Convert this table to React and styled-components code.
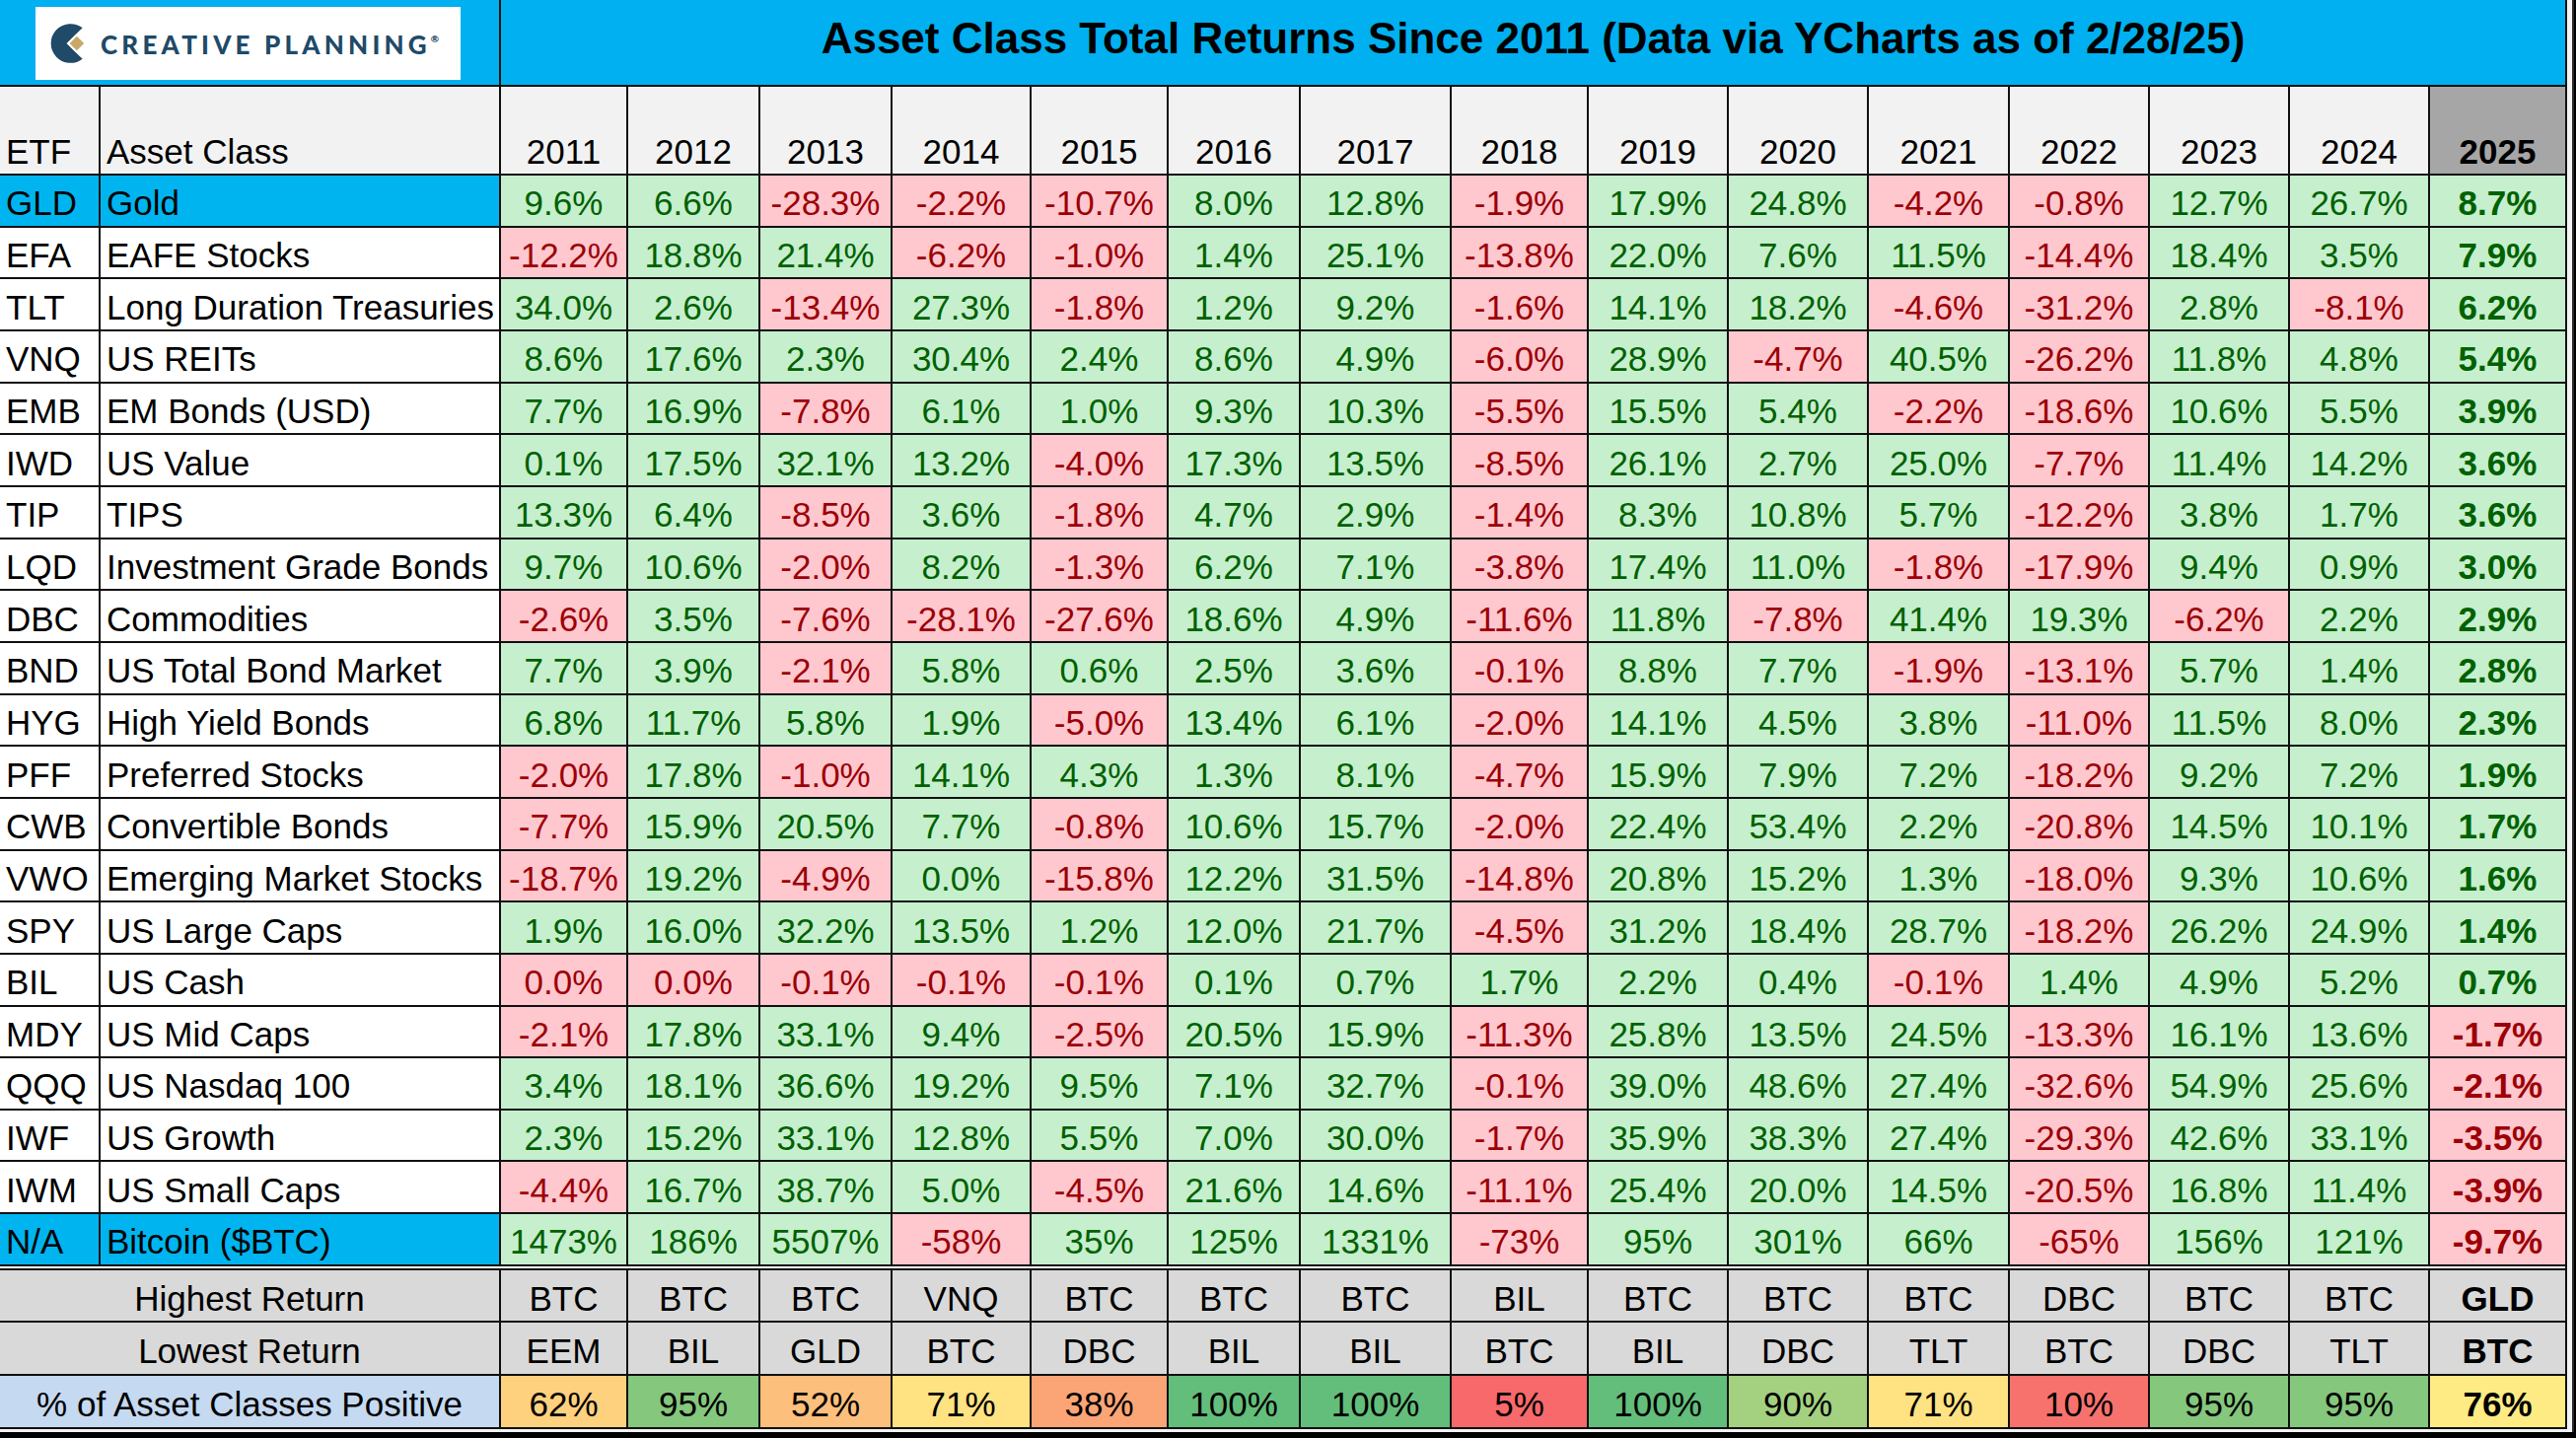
import React from 'react';
import styled, { createGlobalStyle } from 'styled-components';

const FONT = '"Liberation Sans", Arial, Helvetica, sans-serif';

const GlobalStyle = createGlobalStyle`
  html, body { margin: 0; padding: 0; background: #000; }
  body { font-family: ${FONT}; }
`;

const YEARS = [2011, 2012, 2013, 2014, 2015, 2016, 2017, 2018, 2019, 2020, 2021, 2022, 2023, 2024, 2025];
const COLS = [100, 404, 127, 132, 132, 139, 137, 132, 151, 137, 140, 140, 141, 140, 140, 140, 137];

const ROWS = [
  { etf: 'GLD', name: 'Gold', hl: true, v: ['9.6%', '6.6%', '-28.3%', '-2.2%', '-10.7%', '8.0%', '12.8%', '-1.9%', '17.9%', '24.8%', '-4.2%', '-0.8%', '12.7%', '26.7%', '8.7%'] },
  { etf: 'EFA', name: 'EAFE Stocks', v: ['-12.2%', '18.8%', '21.4%', '-6.2%', '-1.0%', '1.4%', '25.1%', '-13.8%', '22.0%', '7.6%', '11.5%', '-14.4%', '18.4%', '3.5%', '7.9%'] },
  { etf: 'TLT', name: 'Long Duration Treasuries', v: ['34.0%', '2.6%', '-13.4%', '27.3%', '-1.8%', '1.2%', '9.2%', '-1.6%', '14.1%', '18.2%', '-4.6%', '-31.2%', '2.8%', '-8.1%', '6.2%'] },
  { etf: 'VNQ', name: 'US REITs', v: ['8.6%', '17.6%', '2.3%', '30.4%', '2.4%', '8.6%', '4.9%', '-6.0%', '28.9%', '-4.7%', '40.5%', '-26.2%', '11.8%', '4.8%', '5.4%'] },
  { etf: 'EMB', name: 'EM Bonds (USD)', v: ['7.7%', '16.9%', '-7.8%', '6.1%', '1.0%', '9.3%', '10.3%', '-5.5%', '15.5%', '5.4%', '-2.2%', '-18.6%', '10.6%', '5.5%', '3.9%'] },
  { etf: 'IWD', name: 'US Value', v: ['0.1%', '17.5%', '32.1%', '13.2%', '-4.0%', '17.3%', '13.5%', '-8.5%', '26.1%', '2.7%', '25.0%', '-7.7%', '11.4%', '14.2%', '3.6%'] },
  { etf: 'TIP', name: 'TIPS', v: ['13.3%', '6.4%', '-8.5%', '3.6%', '-1.8%', '4.7%', '2.9%', '-1.4%', '8.3%', '10.8%', '5.7%', '-12.2%', '3.8%', '1.7%', '3.6%'] },
  { etf: 'LQD', name: 'Investment Grade Bonds', v: ['9.7%', '10.6%', '-2.0%', '8.2%', '-1.3%', '6.2%', '7.1%', '-3.8%', '17.4%', '11.0%', '-1.8%', '-17.9%', '9.4%', '0.9%', '3.0%'] },
  { etf: 'DBC', name: 'Commodities', v: ['-2.6%', '3.5%', '-7.6%', '-28.1%', '-27.6%', '18.6%', '4.9%', '-11.6%', '11.8%', '-7.8%', '41.4%', '19.3%', '-6.2%', '2.2%', '2.9%'] },
  { etf: 'BND', name: 'US Total Bond Market', v: ['7.7%', '3.9%', '-2.1%', '5.8%', '0.6%', '2.5%', '3.6%', '-0.1%', '8.8%', '7.7%', '-1.9%', '-13.1%', '5.7%', '1.4%', '2.8%'] },
  { etf: 'HYG', name: 'High Yield Bonds', v: ['6.8%', '11.7%', '5.8%', '1.9%', '-5.0%', '13.4%', '6.1%', '-2.0%', '14.1%', '4.5%', '3.8%', '-11.0%', '11.5%', '8.0%', '2.3%'] },
  { etf: 'PFF', name: 'Preferred Stocks', v: ['-2.0%', '17.8%', '-1.0%', '14.1%', '4.3%', '1.3%', '8.1%', '-4.7%', '15.9%', '7.9%', '7.2%', '-18.2%', '9.2%', '7.2%', '1.9%'] },
  { etf: 'CWB', name: 'Convertible Bonds', v: ['-7.7%', '15.9%', '20.5%', '7.7%', '-0.8%', '10.6%', '15.7%', '-2.0%', '22.4%', '53.4%', '2.2%', '-20.8%', '14.5%', '10.1%', '1.7%'] },
  { etf: 'VWO', name: 'Emerging Market Stocks', v: ['-18.7%', '19.2%', '-4.9%', '0.0%', '-15.8%', '12.2%', '31.5%', '-14.8%', '20.8%', '15.2%', '1.3%', '-18.0%', '9.3%', '10.6%', '1.6%'] },
  { etf: 'SPY', name: 'US Large Caps', v: ['1.9%', '16.0%', '32.2%', '13.5%', '1.2%', '12.0%', '21.7%', '-4.5%', '31.2%', '18.4%', '28.7%', '-18.2%', '26.2%', '24.9%', '1.4%'] },
  { etf: 'BIL', name: 'US Cash', zeroNeg: true, v: ['0.0%', '0.0%', '-0.1%', '-0.1%', '-0.1%', '0.1%', '0.7%', '1.7%', '2.2%', '0.4%', '-0.1%', '1.4%', '4.9%', '5.2%', '0.7%'] },
  { etf: 'MDY', name: 'US Mid Caps', v: ['-2.1%', '17.8%', '33.1%', '9.4%', '-2.5%', '20.5%', '15.9%', '-11.3%', '25.8%', '13.5%', '24.5%', '-13.3%', '16.1%', '13.6%', '-1.7%'] },
  { etf: 'QQQ', name: 'US Nasdaq 100', v: ['3.4%', '18.1%', '36.6%', '19.2%', '9.5%', '7.1%', '32.7%', '-0.1%', '39.0%', '48.6%', '27.4%', '-32.6%', '54.9%', '25.6%', '-2.1%'] },
  { etf: 'IWF', name: 'US Growth', v: ['2.3%', '15.2%', '33.1%', '12.8%', '5.5%', '7.0%', '30.0%', '-1.7%', '35.9%', '38.3%', '27.4%', '-29.3%', '42.6%', '33.1%', '-3.5%'] },
  { etf: 'IWM', name: 'US Small Caps', v: ['-4.4%', '16.7%', '38.7%', '5.0%', '-4.5%', '21.6%', '14.6%', '-11.1%', '25.4%', '20.0%', '14.5%', '-20.5%', '16.8%', '11.4%', '-3.9%'] },
  { etf: 'N/A', name: 'Bitcoin ($BTC)', hl: true, v: ['1473%', '186%', '5507%', '-58%', '35%', '125%', '1331%', '-73%', '95%', '301%', '66%', '-65%', '156%', '121%', '-9.7%'] },
];

const HIGHEST = ['BTC', 'BTC', 'BTC', 'VNQ', 'BTC', 'BTC', 'BTC', 'BIL', 'BTC', 'BTC', 'BTC', 'DBC', 'BTC', 'BTC', 'GLD'];
const LOWEST = ['EEM', 'BIL', 'GLD', 'BTC', 'DBC', 'BIL', 'BIL', 'BTC', 'BIL', 'DBC', 'TLT', 'BTC', 'DBC', 'TLT', 'BTC'];
const POSITIVE = [62, 95, 52, 71, 38, 100, 100, 5, 100, 90, 71, 10, 95, 95, 76];

// excel 3-colour scale: min red, 50th percentile yellow, max green
const RED = [248, 105, 107];
const YELLOW = [255, 235, 132];
const GREEN = [99, 190, 123];

const mix = (a, b, t) => a.map((c, i) => Math.round(c + (b[i] - c) * t));

function scaleColor(value, list) {
  const sorted = [...list].sort((a, b) => a - b);
  const min = sorted[0];
  const max = sorted[sorted.length - 1];
  const pos = (sorted.length - 1) / 2;
  const lo = Math.floor(pos);
  const mid = sorted[lo] + (sorted[Math.ceil(pos)] - sorted[lo]) * (pos - lo);
  const rgb = value <= mid
    ? mix(RED, YELLOW, (value - min) / (mid - min || 1))
    : mix(YELLOW, GREEN, (value - mid) / (max - mid || 1));
  return `rgb(${rgb.join(',')})`;
}

const Page = styled.div`
  width: 2612px;
  height: 1458px;
  overflow: hidden;
  background: #000;
`;

const Frame = styled.div`
  display: flex;
  width: fit-content;
  background: #f3f3f3;
  padding: 0 5px 3px 0;
  border-right: 2px solid #2a2a2a;
`;

const Sheet = styled.div`
  display: grid;
  grid-template-columns: ${COLS.map((c) => `${c}px`).join(' ')};
  grid-template-rows: 86px 88px repeat(21, 50.67px) 2px repeat(3, 51.67px);
  gap: 2px;
  background: #111;
  border-right: 2px solid #111;
  border-bottom: 2px solid #111;
  font-family: ${FONT};
  color: #000;
`;

const Cell = styled.div`
  display: flex;
  align-items: center;
  justify-content: ${(p) => (p.$left ? 'flex-start' : 'center')};
  padding: 5px ${(p) => (p.$left ? '6px' : '0')} 0;
  font-size: 35px;
  line-height: 1;
  font-weight: ${(p) => (p.$strong ? 700 : 400)};
  white-space: nowrap;
  overflow: hidden;
`;

const LogoCell = styled.div`
  grid-column: 1 / 3;
  background: #00b0f0;
  padding: 7px 0 5px 36px;
  display: flex;
`;

const LogoBox = styled.div`
  width: 431px;
  background: #fff;
  display: flex;
  align-items: center;
  gap: 13px;
  padding-left: 11px;
  box-sizing: border-box;
`;

const Brand = styled.span`
  font-family: Lato, "Open Sans", sans-serif;
  font-weight: 900;
  font-size: 26px;
  letter-spacing: 4.2px;
  color: #1f4a68;
  margin-top: 2px;

  sup {
    font-size: 10px;
    letter-spacing: 0;
    vertical-align: 12px;
  }
`;

const TitleCell = styled.div`
  grid-column: 3 / -1;
  background: #00b0f0;
  display: flex;
  align-items: center;
  justify-content: center;
  padding-bottom: 8px;
  font-size: 44px;
  font-weight: 700;
  white-space: nowrap;
`;

const HeadCell = styled(Cell)`
  align-items: flex-end;
  padding-bottom: 5px;
  background: ${(p) => (p.$accent ? '#a6a6a6' : '#f2f2f2')};
`;

const NameCell = styled(Cell)`
  background: ${(p) => (p.$hl ? '#00b5ef' : '#fff')};
`;

const ValueCell = styled(Cell)`
  background: ${(p) => (p.$neg ? '#ffc7ce' : '#c6efce')};
  color: ${(p) => (p.$neg ? '#9c0006' : '#006100')};
`;

const Divider = styled.div`
  grid-column: 1 / -1;
  background: #fff;
`;

const SummaryLabel = styled(Cell)`
  grid-column: 1 / 3;
  background: ${(p) => (p.$blue ? '#c5d9f1' : '#d9d9d9')};
`;

const SummaryCell = styled(Cell)`
  background: #d9d9d9;
`;

function LogoMark() {
  return (
    <svg width="42" height="48" viewBox="0 0 40 46">
      <path d="M35 8 A19 19 0 1 0 35 38 L27 30.5 L19.5 23 L27 15.5 Z" fill="#1f4a68" />
      <path d="M29.5 16 L36.5 23 L29.5 30 L22.5 23 Z" fill="#c9a867" />
    </svg>
  );
}

const isNeg = (val, row) => val.startsWith('-') || (row.zeroNeg && val === '0.0%');

export default function App() {
  const last = YEARS.length - 1;
  return (
    <Page>
      <GlobalStyle />
      <Frame>
        <Sheet>
          <LogoCell>
            <LogoBox>
              <LogoMark />
              <Brand>
                CREATIVE PLANNING<sup>®</sup>
              </Brand>
            </LogoBox>
          </LogoCell>
          <TitleCell>Asset Class Total Returns Since 2011 (Data via YCharts as of 2/28/25)</TitleCell>

          <HeadCell $left>ETF</HeadCell>
          <HeadCell $left>Asset Class</HeadCell>
          {YEARS.map((y, i) => (
            <HeadCell key={y} $accent={i === last} $strong={i === last}>
              {y}
            </HeadCell>
          ))}

          {ROWS.map((row) => (
            <React.Fragment key={row.etf}>
              <NameCell $left $hl={row.hl}>{row.etf}</NameCell>
              <NameCell $left $hl={row.hl}>{row.name}</NameCell>
              {row.v.map((val, i) => (
                <ValueCell key={i} $neg={isNeg(val, row)} $strong={i === last}>
                  {val}
                </ValueCell>
              ))}
            </React.Fragment>
          ))}

          <Divider />

          <SummaryLabel>Highest Return</SummaryLabel>
          {HIGHEST.map((t, i) => (
            <SummaryCell key={i} $strong={i === last}>{t}</SummaryCell>
          ))}

          <SummaryLabel>Lowest Return</SummaryLabel>
          {LOWEST.map((t, i) => (
            <SummaryCell key={i} $strong={i === last}>{t}</SummaryCell>
          ))}

          <SummaryLabel $blue>% of Asset Classes Positive</SummaryLabel>
          {POSITIVE.map((p, i) => (
            <SummaryCell
              key={i}
              $strong={i === last}
              style={{ background: scaleColor(p, POSITIVE) }}
            >
              {p}%
            </SummaryCell>
          ))}
        </Sheet>
      </Frame>
    </Page>
  );
}
